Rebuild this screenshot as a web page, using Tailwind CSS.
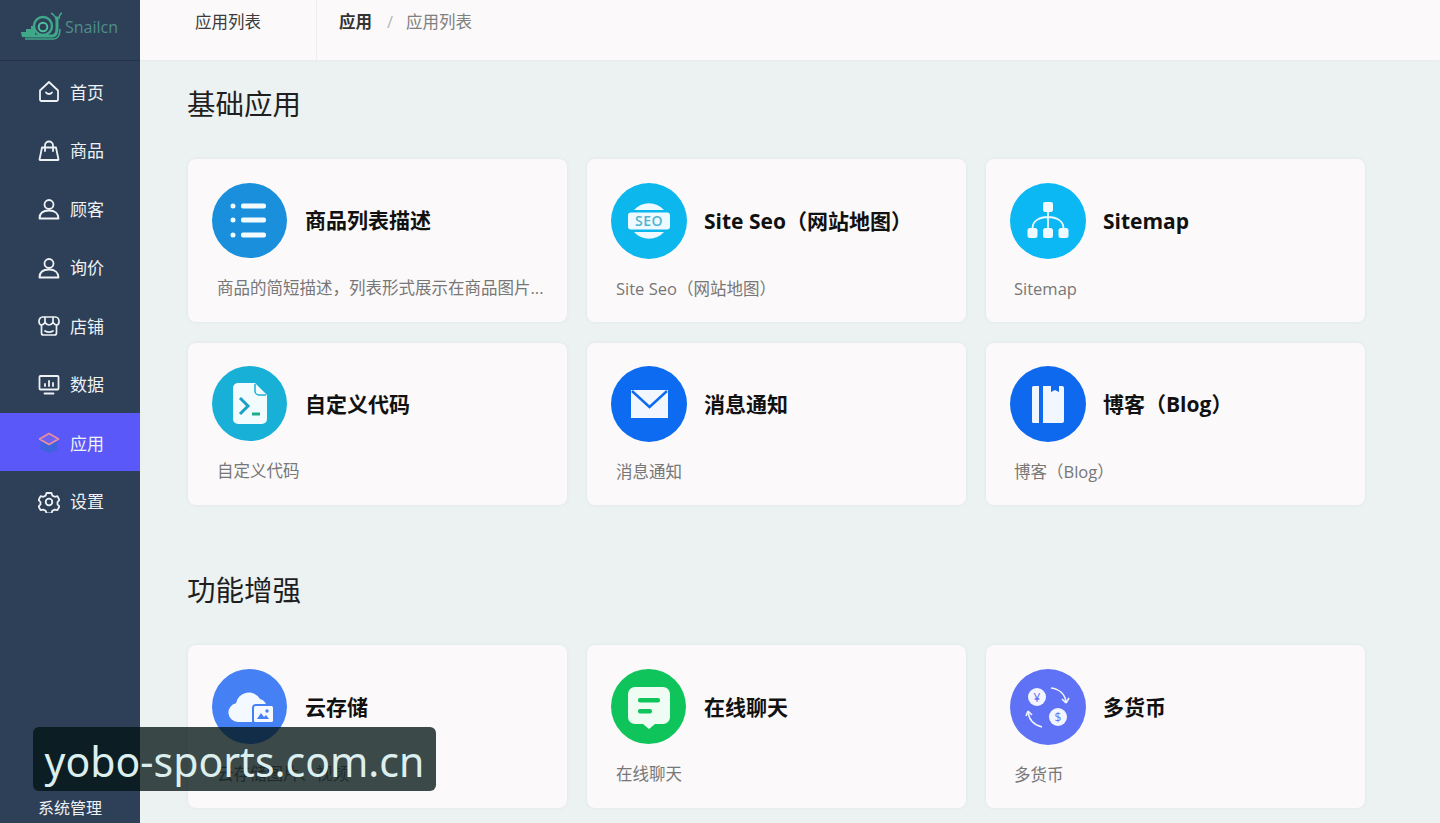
<!DOCTYPE html>
<html lang="zh-CN">
<head>
    <meta charset="UTF-8">
    <title>应用列表</title>
    <script src="https://cdn.jsdelivr.net/npm/@tailwindcss/browser@4"></script>
</head>
<body class="relative h-[823px] w-[1440px] overflow-hidden bg-[#ecf1f2] font-['Open_Sans','Noto_Sans_CJK_SC',sans-serif]">
<div class="flex h-[823px]">
    <!-- 侧边栏 -->
    <aside class="flex h-full w-[140px] shrink-0 flex-col bg-[#2e3f58] text-[17px] text-[#eef2f4]">
        <div class="flex h-[61px] items-center border-b border-[#253347] pb-[6px] pl-[20px]">
            <svg class="h-[30px] w-[43px]" viewBox="0 0 43 30" fill="none">
                <path d="M1 20h5v-3h5v-3h4v11H2z" fill="#3fa888"/>
                <path d="M5 24h27c3 0 5-3 5-8V6h-2" stroke="#3fa888" stroke-width="3"/>
                <path d="M5 27h28c5 0 7-4 7-10" stroke="#3fa888" stroke-width="1.500"/>
                <circle cx="23" cy="14" r="9" stroke="#3fa888" stroke-width="2.400" fill="#2e3f58"/>
                <circle cx="23" cy="15" r="4.300" stroke="#4cc09c" stroke-width="2"/>
                <path d="M36 6c-1-2-3-4-5-5M39 7c0-3 1-5 3-6" stroke="#3fa888" stroke-width="1.500"/>
            </svg>
            <span class="ml-[2px] text-[16px] leading-none text-[#4d8f88]">Snailcn</span>
        </div>
        <nav class="mt-[0.5px]">
            <a class="flex h-[58.5px] items-center gap-[10px] pt-[3px] pl-[38px]">
                <svg class="h-[22px] w-[22px]" viewBox="0 0 22 22" fill="none" stroke="currentColor" stroke-width="1.800" stroke-linejoin="round" stroke-linecap="round"><path d="M2 9.500 11 1l9 8.500v9a1.500 1.500 0 0 1-1.500 1.500h-15A1.500 1.500 0 0 1 2 18.500z"/><path d="M8 11.500c1.500 2 4.500 2 6 0"/></svg>
                <span>首页</span>
            </a>
            <a class="flex h-[58.5px] items-center gap-[10px] pt-[3px] pl-[38px]">
                <svg class="h-[22px] w-[22px]" viewBox="0 0 22 22" fill="none" stroke="currentColor" stroke-width="1.800" stroke-linejoin="round" stroke-linecap="round"><path d="M4 7.500h14l2.500 12a.5.5 0 0 1-.5.5H2a.5.5 0 0 1-.5-.5z"/><path d="M7 11V5.500a4 4 0 0 1 8 0V11"/></svg>
                <span>商品</span>
            </a>
            <a class="flex h-[58.5px] items-center gap-[10px] pt-[3px] pl-[38px]">
                <svg class="h-[22px] w-[22px]" viewBox="0 0 22 22" fill="none" stroke="currentColor" stroke-width="1.800" stroke-linejoin="round"><circle cx="11" cy="6.500" r="4.500"/><path d="M1.500 20.500c0-5 3.500-8 9.500-8s9.500 3 9.500 8z"/></svg>
                <span>顾客</span>
            </a>
            <a class="flex h-[58.5px] items-center gap-[10px] pt-[3px] pl-[38px]">
                <svg class="h-[22px] w-[22px]" viewBox="0 0 22 22" fill="none" stroke="currentColor" stroke-width="1.800" stroke-linejoin="round"><circle cx="11" cy="6.500" r="4.500"/><path d="M1.500 20.500c0-5 3.500-8 9.500-8s9.500 3 9.500 8z"/></svg>
                <span>询价</span>
            </a>
            <a class="flex h-[58.5px] items-center gap-[10px] pt-[3px] pl-[38px]">
                <svg class="h-[22px] w-[22px]" viewBox="0 0 22 22" fill="none" stroke="currentColor" stroke-width="1.700" stroke-linejoin="round" stroke-linecap="round"><path d="M4.500 2h13c2 0 3.500 2 3.500 4.500 0 2-1 3.500-2.500 3.500S16 9 15 7.500C14 9 12.500 10 11 10S8 9 7 7.500C6 9 5 10 3.500 10S1 8.500 1 6.500C1 4 2.500 2 4.500 2z"/><path d="M7 2.500v5M15 2.500v5"/><path d="M3.500 10v8a2 2 0 0 0 2 2h11a2 2 0 0 0 2-2v-8"/><path d="M7 16c2.500 1.500 5.500 1.500 8 0"/></svg>
                <span>店铺</span>
            </a>
            <a class="flex h-[58.5px] items-center gap-[10px] pt-[3px] pl-[38px]">
                <svg class="h-[22px] w-[22px]" viewBox="0 0 22 22" fill="none" stroke="currentColor" stroke-width="1.800" stroke-linecap="round"><rect x="1.500" y="2" width="19" height="13.500" rx="1"/><path d="M6.500 19.500h9M7 12V10M11 12V7M15 12V9"/></svg>
                <span>数据</span>
            </a>
            <a class="flex h-[58.5px] items-center gap-[10px] bg-[#5b58fa] pt-[3px] pl-[38px]">
                <svg class="h-[22px] w-[22px]" viewBox="0 0 22 22" fill="none"><path d="M2.500 9v8.500L11 21l8.500-3.500V9L11 13z" fill="#3f63dd"/><path d="M11 1.500 20.500 7 11 12.500 1.500 7z" fill="#6d60f2" stroke="#e98f9c" stroke-width="1.600" stroke-linejoin="round"/></svg>
                <span>应用</span>
            </a>
            <a class="flex h-[58.5px] items-center gap-[10px] pt-[3px] pl-[38px]">
                <svg class="h-[22px] w-[22px]" viewBox="0 0 22 22" fill="none" stroke="currentColor" stroke-width="1.800" stroke-linejoin="round"><path d="M8.500 2h5l.8 2.600 2.500 1.200 2.600-.6 2 3.800-1.900 2 0 2.400 1.900 2-2 3.800-2.600-.6-2.500 1.200-.8 2.600h-5l-.8-2.600-2.500-1.200-2.600.6-2-3.800 1.900-2V11L.6 9l2-3.800 2.600.6 2.500-1.200z"/><circle cx="11" cy="11" r="3.300"/></svg>
                <span>设置</span>
            </a>
        </nav>
        <div class="mt-auto pb-[3px] pl-[38px] text-[16px] leading-[24px]">系统管理</div>
    </aside>

    <main class="min-w-0 flex-1">
        <!-- 顶部栏 -->
        <header class="flex h-[60px] items-stretch bg-[#fbf9f9] text-[16.5px] shadow-[0_1px_2px_rgba(0,0,0,0.03)]">
            <div class="flex w-[177px] items-center border-r border-[#eeeeee] pb-[16px] pl-[55px] text-[#3c3c3c]">应用列表</div>
            <div class="flex items-center pb-[16px] pl-[22px]">
                <span class="font-bold text-[#333333]">应用</span>
                <span class="mr-[13px] ml-[15px] text-[#b5b5b5]">/</span>
                <span class="text-[#808080]">应用列表</span>
            </div>
        </header>

        <div class="pl-[48px]">
            <h2 class="mt-[24px] mb-[35px] -ml-[1px] text-[28.5px] leading-[40px] text-[#1f1f1f]">基础应用</h2>
            <div class="grid w-[1177px] grid-cols-3 gap-x-[20px] gap-y-[21px]">
                <div class="h-[162.5px] rounded-lg bg-[#fbf9f9] px-6 pt-[23.5px] shadow-[0_0_4px_rgba(0,0,0,0.05)]">
                    <div class="flex items-center gap-[18px]">
                        <div class="flex h-[75px] w-[75px] shrink-0 items-center justify-center rounded-full bg-[#1a90dc]">
                            <svg class="h-[40px] w-[40px]" viewBox="0 0 40 40" fill="#f4fbff"><circle cx="3" cy="6" r="2.500"/><circle cx="3" cy="20" r="2.500"/><circle cx="3" cy="35" r="2.500"/><rect x="11" y="3.500" width="25" height="5" rx="2"/><rect x="11" y="17.500" width="25" height="5" rx="2"/><rect x="11" y="32.500" width="25" height="5" rx="2"/></svg>
                        </div>
                        <h3 class="pt-[2px] text-[21px] font-bold text-[#111111]">商品列表描述</h3>
                    </div>
                    <p class="mt-[18px] pl-[5px] text-[16.5px] leading-[24px] whitespace-nowrap text-[#777777]">商品的简短描述，列表形式展示在商品图片...</p>
                </div>
                <div class="h-[162.5px] rounded-lg bg-[#fbf9f9] px-6 pt-[23.5px] shadow-[0_0_4px_rgba(0,0,0,0.05)]">
                    <div class="flex items-center gap-[17px]">
                        <div class="flex h-[76px] w-[76px] shrink-0 items-center justify-center rounded-full bg-[#0cb7ee]">
                            <svg class="h-[44px] w-[46px]" viewBox="0 0 46 44"><path d="M8 11a20 20 0 0 1 30 0zM8 33a20 20 0 0 0 30 0z" fill="#eefaff"/><rect x="2" y="13.500" width="42" height="17" rx="3" fill="#eefaff"/><text x="23" y="27" text-anchor="middle" font-family="Open Sans" font-weight="600" font-size="14" letter-spacing="0.5" fill="#4db5d0">SEO</text></svg>
                        </div>
                        <h3 class="pt-[2px] text-[21px] font-bold text-[#111111]">Site Seo（网站地图）</h3>
                    </div>
                    <p class="mt-[18px] pl-[5px] text-[16.5px] leading-[24px] text-[#777777]">Site Seo（网站地图）</p>
                </div>
                <div class="h-[162.5px] rounded-lg bg-[#fbf9f9] px-6 pt-[23.5px] shadow-[0_0_4px_rgba(0,0,0,0.05)]">
                    <div class="flex items-center gap-[17px]">
                        <div class="flex h-[76px] w-[76px] shrink-0 items-center justify-center rounded-full bg-[#0bb8f3]">
                            <svg class="h-[38px] w-[42px]" viewBox="0 0 42 38" fill="#eefaff"><rect x="16" y="0" width="10" height="10" rx="2"/><rect x="0.500" y="26" width="10" height="10" rx="2.500"/><rect x="16" y="26" width="10" height="10" rx="2.500"/><rect x="31.500" y="26" width="10" height="10" rx="2.500"/><path d="M21 10v16M5.500 26c0-7 7-11 15.500-11s15.500 4 15.500 11" fill="none" stroke="#eefaff" stroke-width="1.800"/></svg>
                        </div>
                        <h3 class="pt-[2px] text-[21px] font-bold text-[#111111]">Sitemap</h3>
                    </div>
                    <p class="mt-[18px] pl-[4px] text-[16.5px] leading-[24px] text-[#777777]">Sitemap</p>
                </div>

                <div class="h-[162.5px] rounded-lg bg-[#fbf9f9] px-6 pt-[23.5px] shadow-[0_0_4px_rgba(0,0,0,0.05)]">
                    <div class="flex items-center gap-[18px]">
                        <div class="flex h-[75px] w-[75px] shrink-0 items-center justify-center rounded-full bg-[#19b0d8]">
                            <svg class="h-[41px] w-[34px]" viewBox="0 0 34 41" fill="none"><path d="M5 0h17l12 12v24a5 5 0 0 1-5 5H5a5 5 0 0 1-5-5V5a5 5 0 0 1 5-5z" fill="#f2fbfd"/><path d="M22 1v7a4 4 0 0 0 4 4h7" stroke="#19b0d8" stroke-width="1.500"/><path d="M7 15l8 8-8 8" stroke="#19a0c8" stroke-width="3"/><path d="M19 31h8" stroke="#1fae8c" stroke-width="3"/></svg>
                        </div>
                        <h3 class="pt-[2px] text-[21px] font-bold text-[#111111]">自定义代码</h3>
                    </div>
                    <p class="mt-[18px] pl-[5px] text-[16.5px] leading-[24px] text-[#777777]">自定义代码</p>
                </div>
                <div class="h-[162.5px] rounded-lg bg-[#fbf9f9] px-6 pt-[23.5px] shadow-[0_0_4px_rgba(0,0,0,0.05)]">
                    <div class="flex items-center gap-[17px]">
                        <div class="flex h-[76px] w-[76px] shrink-0 items-center justify-center rounded-full bg-[#0c6bf0]">
                            <svg class="h-[28px] w-[37px]" viewBox="0 0 37 28" fill="none"><rect width="37" height="28" fill="#f2f7ff"/><path d="M1 1l17.500 16L36 1" stroke="#0c6bf0" stroke-width="2.400"/></svg>
                        </div>
                        <h3 class="pt-[2px] text-[21px] font-bold text-[#111111]">消息通知</h3>
                    </div>
                    <p class="mt-[18px] pl-[5px] text-[16.5px] leading-[24px] text-[#777777]">消息通知</p>
                </div>
                <div class="h-[162.5px] rounded-lg bg-[#fbf9f9] px-6 pt-[23.5px] shadow-[0_0_4px_rgba(0,0,0,0.05)]">
                    <div class="flex items-center gap-[17px]">
                        <div class="flex h-[76px] w-[76px] shrink-0 items-center justify-center rounded-full bg-[#0f69ee]">
                            <svg class="h-[37px] w-[32px]" viewBox="0 0 32 37" fill="#f2f7ff"><path d="M1.500 0H7v37H1.500A1.500 1.500 0 0 1 0 35.500v-34A1.500 1.500 0 0 1 1.500 0z"/><path d="M11 0h8v6l4-2 4 2V0h3a2 2 0 0 1 2 2v33a2 2 0 0 1-2 2H11z"/></svg>
                        </div>
                        <h3 class="pt-[2px] text-[21px] font-bold text-[#111111]">博客（Blog）</h3>
                    </div>
                    <p class="mt-[18px] pl-[4px] text-[16.5px] leading-[24px] text-[#777777]">博客（Blog）</p>
                </div>
            </div>

            <h2 class="mt-[65px] mb-[35px] -ml-[1px] text-[28.5px] leading-[40px] text-[#1f1f1f]">功能增强</h2>
            <div class="grid w-[1177px] grid-cols-3 gap-x-[20px]">
                <div class="h-[163px] rounded-lg bg-[#fbf9f9] px-6 pt-[24px] shadow-[0_0_4px_rgba(0,0,0,0.05)]">
                    <div class="flex items-center gap-[18px]">
                        <div class="flex h-[75px] w-[75px] shrink-0 items-center justify-center rounded-full bg-[#4680f5]">
                            <svg class="ml-[3px] h-[32px] w-[46px]" viewBox="0 0 46 32"><path d="M10 31a9.500 9.500 0 0 1-2-18.800A13 13 0 0 1 32 8a9 9 0 0 1 6 5H28a4 4 0 0 0-4 4v14z" fill="#f4f8ff"/><rect x="26" y="15" width="19" height="16" rx="1.500" fill="#f4f8ff"/><path d="M29 28l4-6 3 4 2-2 3 4z" fill="#4680f5"/><circle cx="39" cy="20" r="1.700" fill="#4680f5"/></svg>
                        </div>
                        <h3 class="pt-[2px] text-[21px] font-bold text-[#111111]">云存储</h3>
                    </div>
                    <p class="mt-[18px] pl-[5px] text-[16.5px] leading-[24px] text-[#777777]">云存储图片、视频</p>
                </div>
                <div class="h-[163px] rounded-lg bg-[#fbf9f9] px-6 pt-[24px] shadow-[0_0_4px_rgba(0,0,0,0.05)]">
                    <div class="flex items-center gap-[18px]">
                        <div class="flex h-[75px] w-[75px] shrink-0 items-center justify-center rounded-full bg-[#10c45c]">
                            <svg class="mt-[3px] h-[42px] w-[42px]" viewBox="0 0 42 42"><path d="M7 0h28a7 7 0 0 1 7 7v23a7 7 0 0 1-7 7h-8l-6 5-6-5H7a7 7 0 0 1-7-7V7a7 7 0 0 1 7-7z" fill="#eefcf3"/><rect x="10" y="11" width="22" height="4.500" rx="2" fill="#10c45c"/><rect x="10" y="22" width="14" height="4.500" rx="2" fill="#10c45c"/></svg>
                        </div>
                        <h3 class="pt-[2px] text-[21px] font-bold text-[#111111]">在线聊天</h3>
                    </div>
                    <p class="mt-[18px] pl-[5px] text-[16.5px] leading-[24px] text-[#777777]">在线聊天</p>
                </div>
                <div class="h-[163px] rounded-lg bg-[#fbf9f9] px-6 pt-[24px] shadow-[0_0_4px_rgba(0,0,0,0.05)]">
                    <div class="flex items-center gap-[17px]">
                        <div class="flex h-[76px] w-[76px] shrink-0 items-center justify-center rounded-full bg-[#5f72f5]">
                            <svg class="h-[44px] w-[46px]" viewBox="0 0 46 44" fill="none"><circle cx="12" cy="12" r="9" fill="#f2f4ff"/><circle cx="33" cy="32" r="9" fill="#f2f4ff"/><text x="12" y="16.500" text-anchor="middle" font-family="Open Sans" font-size="12" fill="#5f72f5">¥</text><text x="33" y="36.500" text-anchor="middle" font-family="Open Sans" font-size="12" fill="#5f72f5">$</text><path d="M26 3c8 1 14 6 15 14M3 27c1 8 6 13 14 15" stroke="#f2f4ff" stroke-width="1.600"/><path d="M41 18l3-5M41 18l-4-4M3 26l-2 5M3 26l4 4" stroke="#f2f4ff" stroke-width="1.600"/></svg>
                        </div>
                        <h3 class="pt-[2px] text-[21px] font-bold text-[#111111]">多货币</h3>
                    </div>
                    <p class="mt-[18px] pl-[4px] text-[16.5px] leading-[24px] text-[#777777]">多货币</p>
                </div>
            </div>
        </div>
    </main>
</div>

<!-- 水印 -->
<div class="absolute top-[727px] left-[33px] flex h-[64px] w-[403px] items-center justify-center rounded-md bg-[rgba(2,20,20,0.77)] pt-[5px] font-['Noto_Sans',sans-serif] text-[41px] leading-none text-[#dcefef]">yobo-sports.com.cn</div>
</body>
</html>
